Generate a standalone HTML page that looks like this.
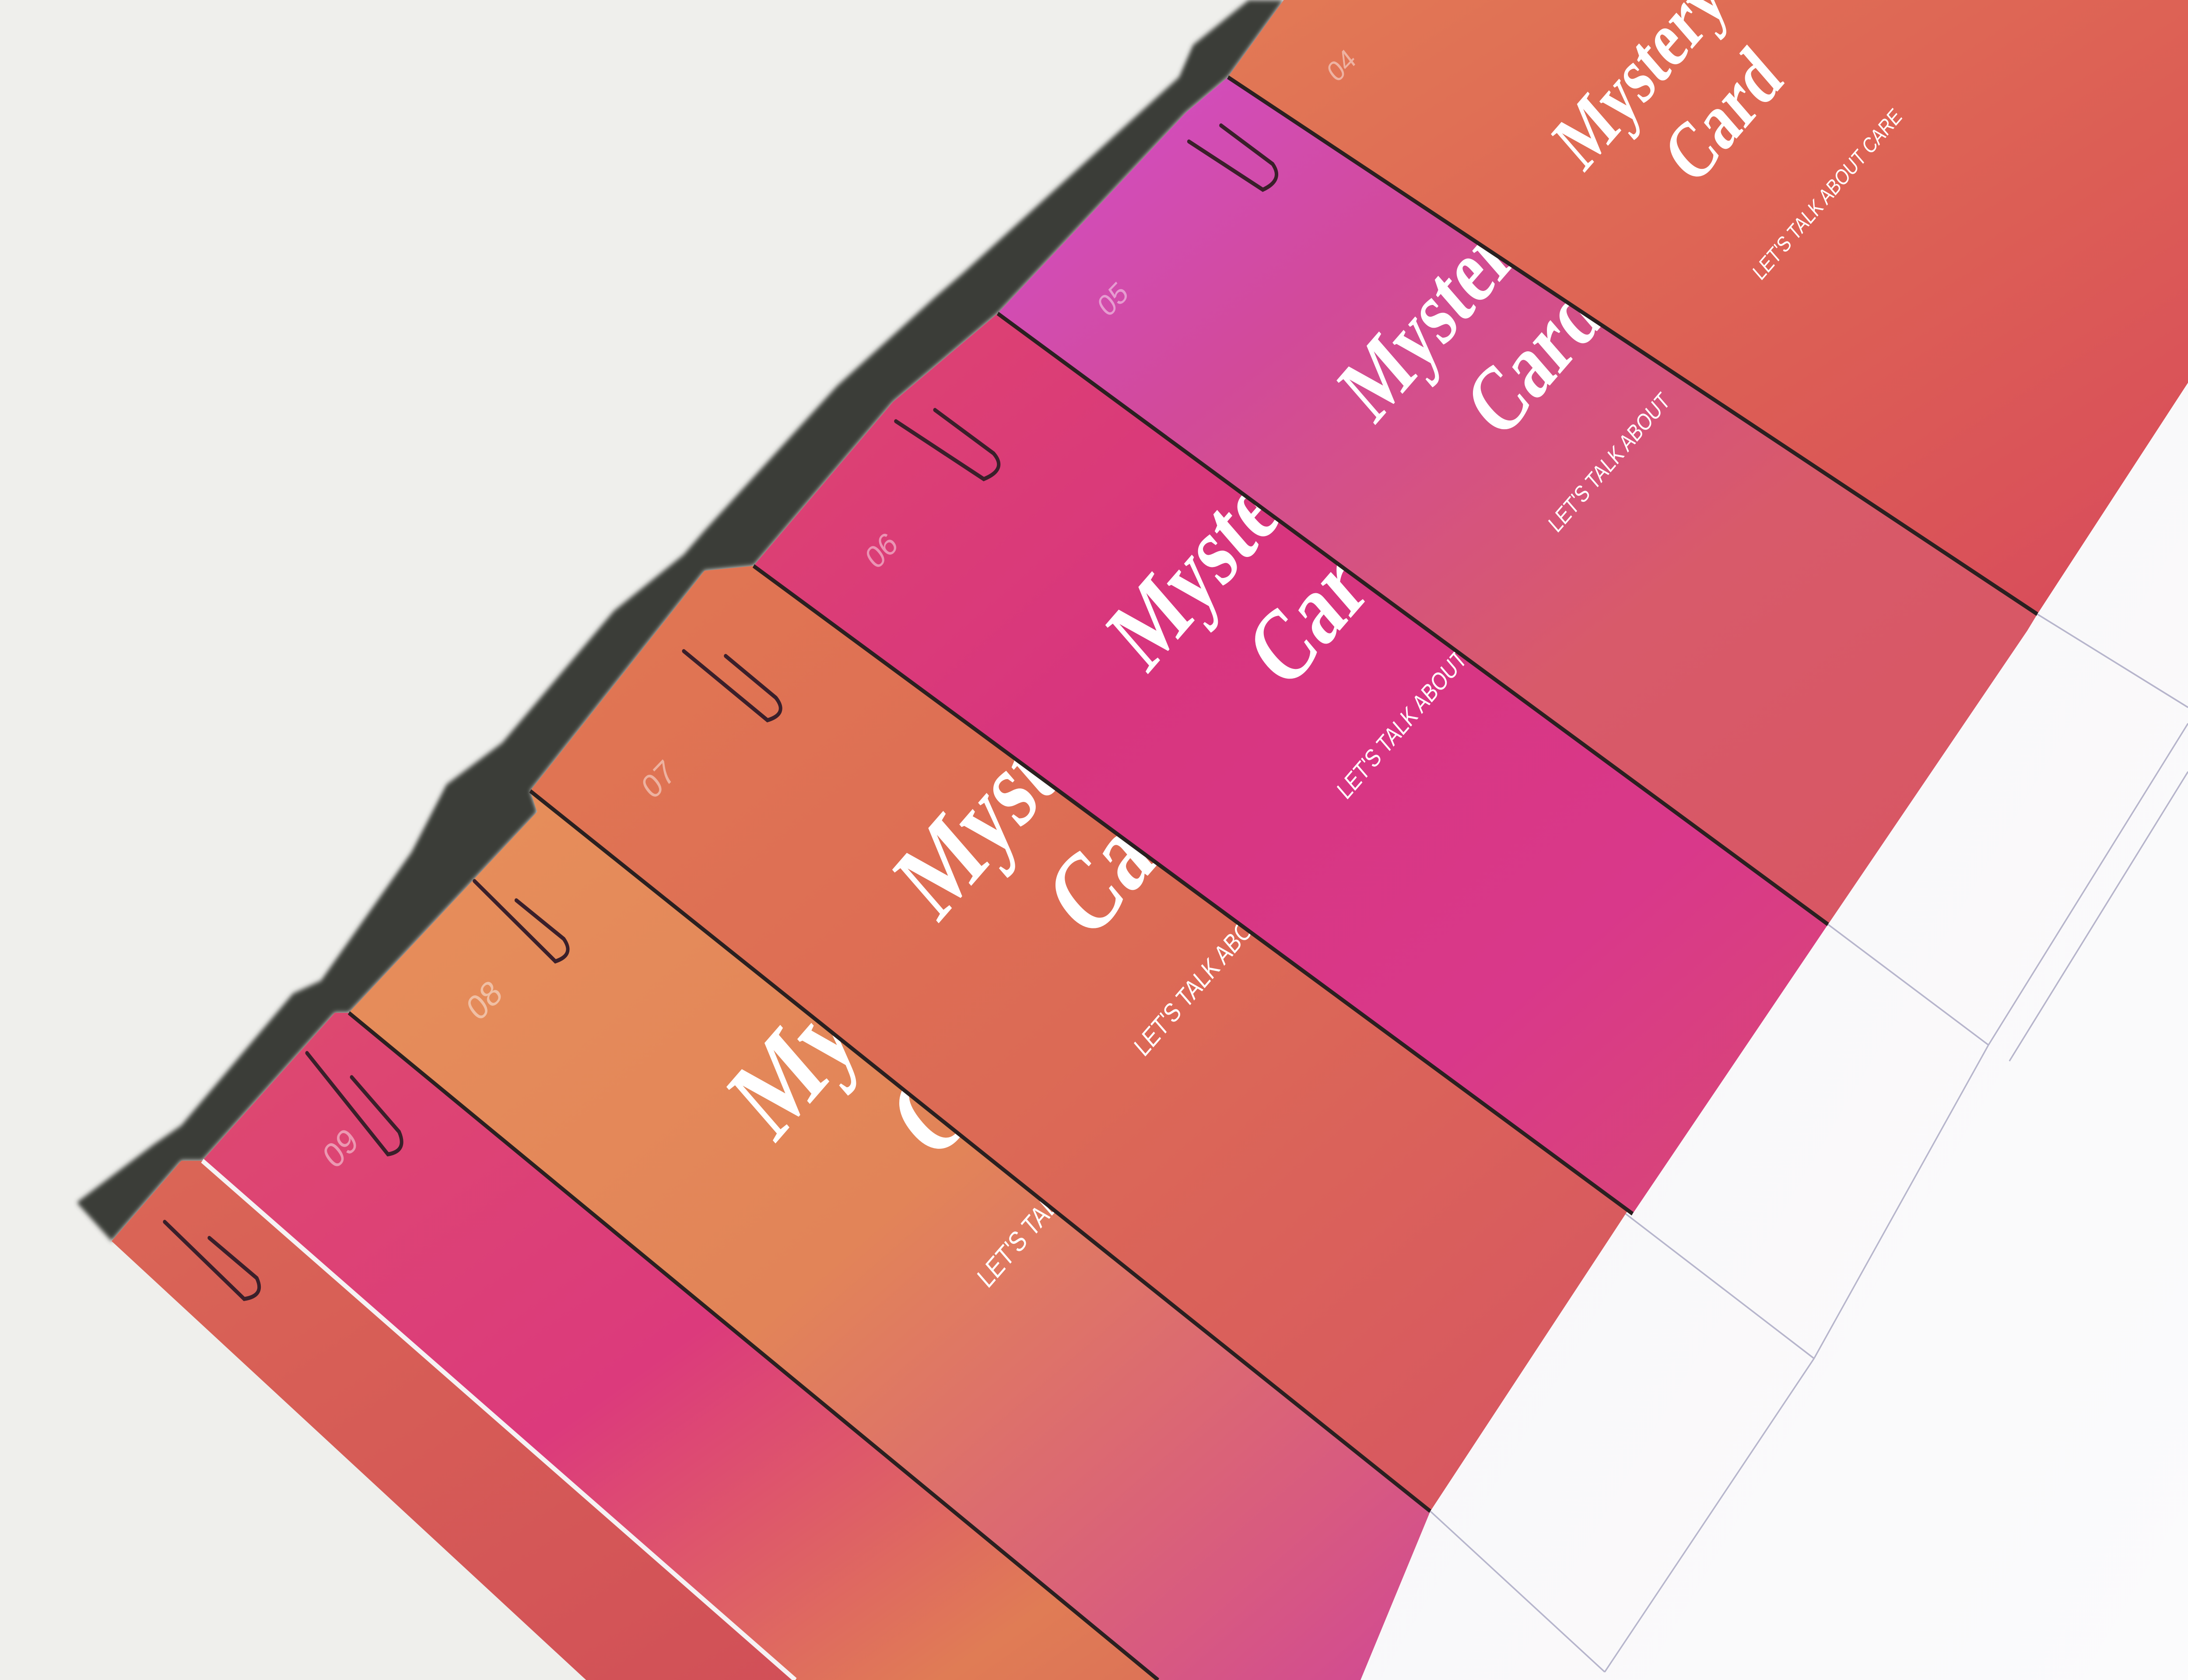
<!DOCTYPE html>
<html><head><meta charset="utf-8"><style>html,body{margin:0;padding:0;width:100%;height:100%;overflow:hidden;background:#efefed}svg{position:absolute;left:0;top:0;width:100vw;height:100vh;display:block}</style></head>
<body>
<svg viewBox="0 0 1568 1045" preserveAspectRatio="none" xmlns="http://www.w3.org/2000/svg">
<defs>
<linearGradient id="g04" x1="0" y1="0" x2="1" y2="1"><stop offset="0" stop-color="#e27a55"/><stop offset="0.6" stop-color="#dc5d55"/><stop offset="1" stop-color="#d84a5c"/></linearGradient>
<linearGradient id="g05" x1="0" y1="0" x2="1" y2="1"><stop offset="0" stop-color="#d24fd2"/><stop offset="0.3" stop-color="#d24a9a"/><stop offset="0.6" stop-color="#d85a6a"/><stop offset="1" stop-color="#d95560"/></linearGradient>
<linearGradient id="g06" x1="0" y1="0" x2="1" y2="1"><stop offset="0" stop-color="#e04a6a"/><stop offset="0.4" stop-color="#d8357e"/><stop offset="0.7" stop-color="#d9388a"/><stop offset="1" stop-color="#d8506a"/></linearGradient>
<linearGradient id="g07" x1="0" y1="0" x2="1" y2="1"><stop offset="0" stop-color="#e27a52"/><stop offset="0.5" stop-color="#dc6a55"/><stop offset="1" stop-color="#d65065"/></linearGradient>
<linearGradient id="g08" x1="0" y1="0" x2="1" y2="1"><stop offset="0" stop-color="#e8925c"/><stop offset="0.5" stop-color="#e28458"/><stop offset="0.8" stop-color="#d85a80"/><stop offset="1" stop-color="#cc3ea0"/></linearGradient>
<linearGradient id="g09" x1="0" y1="0" x2="1" y2="1"><stop offset="0" stop-color="#de4f6a"/><stop offset="0.5" stop-color="#dc3a7c"/><stop offset="0.8" stop-color="#e07c55"/><stop offset="1" stop-color="#d86858"/></linearGradient>
<linearGradient id="g10" x1="0" y1="0" x2="1" y2="1"><stop offset="0" stop-color="#dc6a55"/><stop offset="1" stop-color="#cf4a58"/></linearGradient>
<linearGradient id="paper" x1="0" y1="0" x2="1" y2="1"><stop offset="0" stop-color="#f7f6f8"/><stop offset="1" stop-color="#fbfbfc"/></linearGradient>
<filter id="bl"><feGaussianBlur stdDeviation="1.5"/></filter>
</defs>
<rect width="1568" height="1045" fill="#efefec"/>
<polygon points="1568,120 1568,1045 940,1045" fill="url(#paper)"/>
<g stroke="#9a98b8" stroke-width="1" fill="none" opacity="0.7">
<line x1="1310" y1="575" x2="1425" y2="650"/><line x1="1425" y1="650" x2="1568" y2="450"/>
<line x1="1460" y1="382" x2="1568" y2="440"/>
<line x1="1165" y1="755" x2="1300" y2="845"/><line x1="1300" y1="845" x2="1425" y2="650"/>
<line x1="1025" y1="940" x2="1150" y2="1040"/><line x1="1150" y1="1040" x2="1300" y2="845"/>
<line x1="1440" y1="660" x2="1568" y2="480"/>
</g>
<polygon filter="url(#bl)" fill="#3b3c39" points="895,0 855,28 845,48 690,170 670,185 600,240 505,330 490,345 440,380 360,462 320,488 295,530 230,610 210,618 130,700 110,712 55,748 80,772 130,722 145,722 240,630 250,630 385,505 380,492 505,355 540,352 640,250 715,195 850,70 880,48 920,0"/>

<!-- card 10 -->
<polygon points="80,772 130,722 145,722 240,630 830,1045 420,1045" fill="url(#g10)"/>
<!-- card 09 -->
<polygon points="145,722 240,630 250,630 385,505 1025,940 975,1045 570,1045" fill="url(#g09)"/>
<text transform="translate(240,728) rotate(-42)" fill="#fff" opacity="0.45" font-family="Liberation Sans, sans-serif" font-size="22">09</text>
<line x1="145" y1="722" x2="570" y2="1045" stroke="#f6f2f4" stroke-width="3"/>
<!-- card 08 -->
<polygon points="250,630 385,505 380,492 505,355 1165,755 1025,940 975,1045 830,1045" fill="url(#g08)"/>
<g fill="#fff" font-family="Liberation Serif, serif" font-weight="bold" font-size="76" transform="translate(555,712) rotate(-45) scale(0.8,1)">
<text x="0" y="0">Mystery</text><text x="90" y="90">Card</text>
</g>
<text transform="translate(708,802) rotate(-45) scale(0.85,1)" fill="#fff" font-family="Liberation Sans, sans-serif" font-size="18">LET'S TALK ABOUT</text>
<text transform="translate(343,636) rotate(-42)" fill="#fff" opacity="0.45" font-family="Liberation Sans, sans-serif" font-size="22">08</text>
<line x1="250" y1="630" x2="830" y2="1045" stroke="#2a2020" stroke-width="2.5"/>
<!-- card 07 -->
<polygon points="380,492 505,355 540,352 640,250 1305,575 1165,755 1025,940" fill="url(#g07)"/>
<g fill="#fff" font-family="Liberation Serif, serif" font-weight="bold" font-size="72" transform="translate(672,575) rotate(-45) scale(0.8,1)">
<text x="0" y="0">Mystery</text><text x="85" y="85">Card</text>
</g>
<text transform="translate(820,658) rotate(-45) scale(0.85,1)" fill="#fff" font-family="Liberation Sans, sans-serif" font-size="17">LET'S TALK ABOUT</text>
<text transform="translate(468,498) rotate(-42)" fill="#fff" opacity="0.45" font-family="Liberation Sans, sans-serif" font-size="21">07</text>
<line x1="380" y1="492" x2="1025" y2="940" stroke="#2a2020" stroke-width="2.5"/>
<!-- card 06 -->
<polygon points="540,352 640,250 715,195 850,70 1453,392 1310,575 1170,755" fill="url(#g06)"/>
<g fill="#fff" font-family="Liberation Serif, serif" font-weight="bold" font-size="66" transform="translate(822,420) rotate(-45) scale(0.8,1)">
<text x="0" y="0">Mystery</text><text x="78" y="78">Card</text>
</g>
<text transform="translate(965,498) rotate(-45) scale(0.85,1)" fill="#fff" font-family="Liberation Sans, sans-serif" font-size="16">LET'S TALK ABOUT</text>
<text transform="translate(628,355) rotate(-42)" fill="#fff" opacity="0.45" font-family="Liberation Sans, sans-serif" font-size="20">06</text>
<line x1="540" y1="352" x2="1170" y2="755" stroke="#2a2020" stroke-width="2.5"/>
<!-- card 05 -->
<polygon points="715,195 850,70 880,48 920,0 1568,0 1568,238 1460,382 1453,392 1310,575" fill="url(#g05)"/>
<g fill="#fff" font-family="Liberation Serif, serif" font-weight="bold" font-size="60" transform="translate(985,265) rotate(-45) scale(0.8,1)">
<text x="0" y="0">Mystery</text><text x="71" y="71">Card</text>
</g>
<text transform="translate(1116,332) rotate(-45) scale(0.85,1)" fill="#fff" font-family="Liberation Sans, sans-serif" font-size="15">LET'S TALK ABOUT</text>
<text transform="translate(794,198) rotate(-42)" fill="#fff" opacity="0.45" font-family="Liberation Sans, sans-serif" font-size="19">05</text>
<line x1="715" y1="195" x2="1310" y2="575" stroke="#2a2020" stroke-width="2.5"/>
<!-- card 04 -->
<polygon points="880,48 920,0 1568,0 1568,238 1460,382" fill="url(#g04)"/>
<g fill="#fff" font-family="Liberation Serif, serif" font-weight="bold" font-size="52" transform="translate(1135,108) rotate(-45) scale(0.8,1)">
<text x="0" y="0">Mystery</text><text x="62" y="62">Card</text>
</g>
<text transform="translate(1262,175) rotate(-45) scale(0.85,1)" fill="#fff" font-family="Liberation Sans, sans-serif" font-size="14">LET'S TALK ABOUT CARE</text>
<text transform="translate(958,52) rotate(-42)" fill="#fff" opacity="0.45" font-family="Liberation Sans, sans-serif" font-size="18">04</text>
<line x1="880" y1="48" x2="1460" y2="382" stroke="#2a2020" stroke-width="2.5"/>

<g fill="none" stroke="#3a1f2a" stroke-width="2.5" stroke-linecap="round">
<path d="M852,88 L905,118 Q920,112 912,102 L875,78"/>
<path d="M642,262 L705,298 Q722,292 712,282 L670,255"/>
<path d="M490,405 L550,448 Q565,444 556,434 L520,408"/>
<path d="M340,548 L398,598 Q412,594 404,584 L370,560"/>
<path d="M220,655 L278,718 Q292,716 286,704 L252,670"/>
<path d="M118,760 L175,808 Q190,806 184,795 L150,770"/>
</g>
</svg>
</body></html>
